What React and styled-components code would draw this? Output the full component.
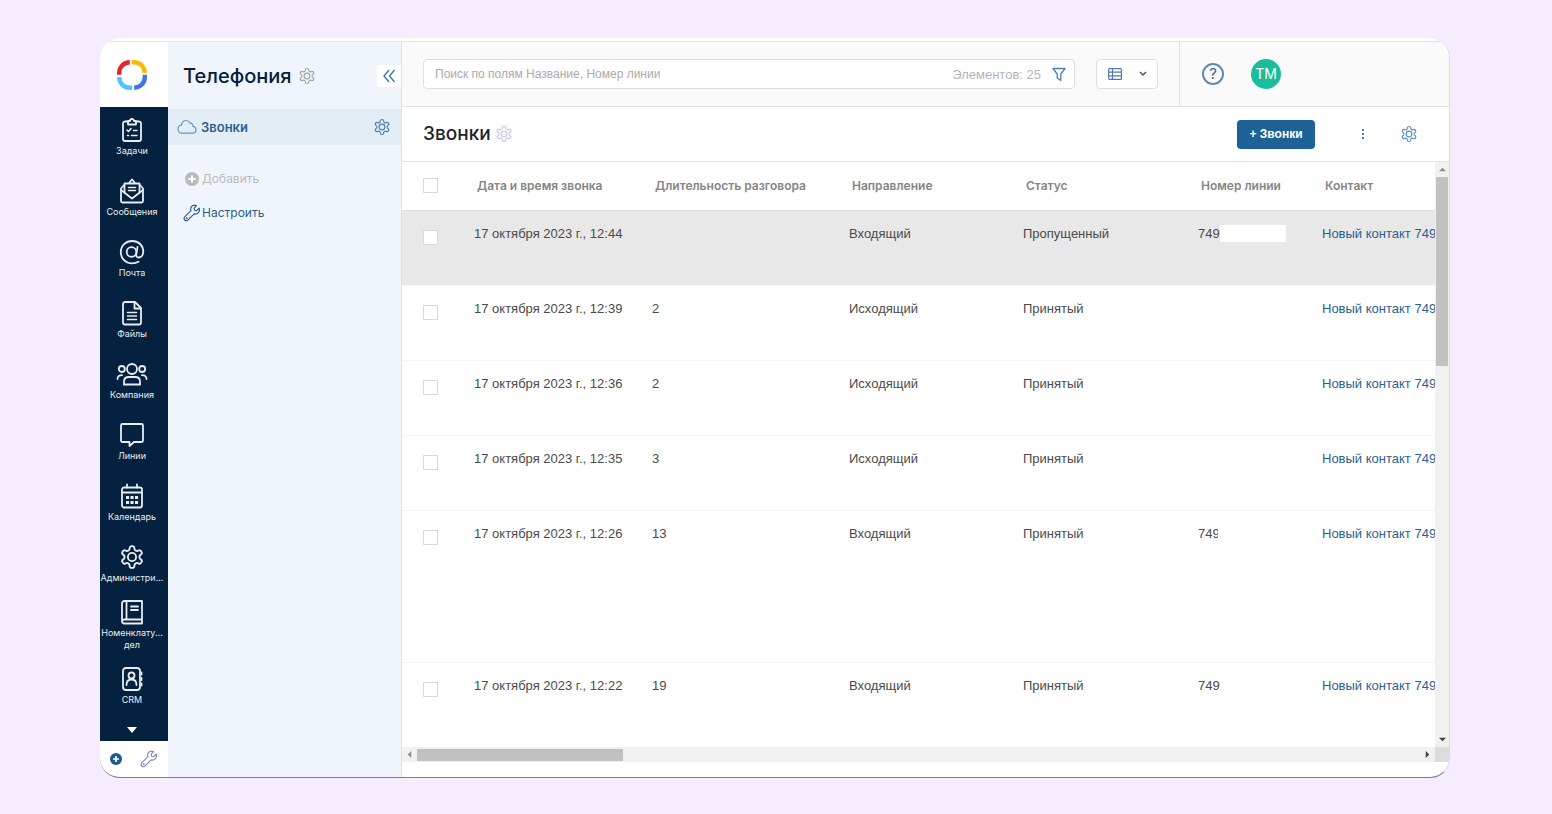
import React from "react";
import styled, { createGlobalStyle, css } from "styled-components";

const GlobalStyle = createGlobalStyle`
  * {
    box-sizing: border-box;
  }
  body {
    margin: 0;
    background: #f5ecfe;
    font-family: "Liberation Sans", Arial, sans-serif;
    font-size: 13px;
    color: #4a4a4a;
  }
  button, input {
    font: inherit;
    color: inherit;
  }
  button {
    border: 0;
    padding: 0;
    background: none;
    cursor: pointer;
  }
  a {
    text-decoration: none;
  }
  svg {
    display: block;
    flex: none;
  }
`;

const Icon = ({ size = 26, stroke = 1.8, children }) => (
  <svg
    width={size}
    height={size}
    viewBox="0 0 26 26"
    fill="none"
    stroke="currentColor"
    strokeWidth={stroke}
    strokeLinecap="round"
    strokeLinejoin="round"
    aria-hidden="true"
  >
    {children}
  </svg>
);

const Gear = ({ size = 18, stroke = 1.6 }) => (
  <svg
    width={size}
    height={size}
    viewBox="0 0 24 24"
    fill="none"
    stroke="currentColor"
    strokeWidth={stroke}
    strokeLinejoin="round"
    aria-hidden="true"
  >
    <path d="M12.22 2h-.44a2 2 0 0 0-2 2v.18a2 2 0 0 1-1 1.73l-.43.25a2 2 0 0 1-2 0l-.15-.08a2 2 0 0 0-2.73.73l-.22.38a2 2 0 0 0 .73 2.73l.15.1a2 2 0 0 1 1 1.72v.51a2 2 0 0 1-1 1.74l-.15.09a2 2 0 0 0-.73 2.73l.22.38a2 2 0 0 0 2.73.73l.15-.08a2 2 0 0 1 2 0l.43.25a2 2 0 0 1 1 1.73V20a2 2 0 0 0 2 2h.44a2 2 0 0 0 2-2v-.18a2 2 0 0 1 1-1.73l.43-.25a2 2 0 0 1 2 0l.15.08a2 2 0 0 0 2.73-.73l.22-.39a2 2 0 0 0-.73-2.73l-.15-.08a2 2 0 0 1-1-1.74v-.5a2 2 0 0 1 1-1.74l.15-.09a2 2 0 0 0 .73-2.73l-.22-.38a2 2 0 0 0-2.73-.73l-.15.08a2 2 0 0 1-2 0l-.43-.25a2 2 0 0 1-1-1.73V4a2 2 0 0 0-2-2z" />
    <circle cx="12" cy="12" r="3.8" />
  </svg>
);

const Wrench = () => (
  <svg width="18" height="18" viewBox="0 0 24 24" fill="none" stroke="currentColor" strokeWidth="1.6" strokeLinejoin="round" aria-hidden="true">
    <path d="M21.6 5.6l-3.5 3.2-2.7-.5-.6-2.8 3.2-3.4c-2.5-1-5.3-.4-6.700 1.500-1.200 1.600-1.300 3.500-.7 5.300L2.300 17.200a2.900 2.900 0 0 0 0 4.200 2.900 2.900 0 0 0 4.200 0l8.300-8.300c1.900.6 4 .2 5.400-1.200 1.700-1.700 2.200-4 1.400-6.300z" />
    <circle cx="4.900" cy="18.900" r=".5" />
  </svg>
);

const PlusDisc = ({ size }) => (
  <svg width={size} height={size} viewBox="0 0 14 14" aria-hidden="true">
    <circle cx="7" cy="7" r="7" fill="currentColor" />
    <path d="M7 3.500v7M3.500 7h7" stroke="#fff" strokeWidth="2" />
  </svg>
);

const navItems = [
  {
    label: "Задачи",
    icon: (
      <Icon>
        <path d="M9 4.500H6a2 2 0 0 0-2 2V22a2 2 0 0 0 2 2h14a2 2 0 0 0 2-2V6.500a2 2 0 0 0-2-2h-3" />
        <path d="M9 7.500h8V4h-2a2 2 0 0 0-4 0H9z" />
        <path d="M8 13l1.500 1.500 2.500-3M14.500 13.500H18M8.500 18.500h1M12.500 18.500H18" strokeWidth="1.600" />
      </Icon>
    ),
  },
  {
    label: "Сообщения",
    icon: (
      <Icon>
        <path d="M5 7L2 10.500V23a1.500 1.500 0 0 0 1.500 1.500h19A1.500 1.500 0 0 0 24 23V10.500L21 7" />
        <path d="M2 12l11 8.500L24 12" />
        <path d="M5.500 14.500V5.500h15v9M9.500 5.500l3.500-4 3.500 4" />
        <path d="M9.500 9.500h7M9.500 12.500h7" strokeWidth="1.500" />
      </Icon>
    ),
  },
  {
    label: "Почта",
    icon: (
      <Icon>
        <circle cx="12.500" cy="13" r="4.800" />
        <path d="M18.500 8l-1.200 7.500c-.3 2 .6 3 2.200 3 2.700 0 4.800-2.500 4.800-6C24.300 6.500 19.500 2 13.200 2 6.800 2 1.800 6.800 1.800 13.200S6.500 24.300 13 24.300c2.500 0 4.600-.5 6.500-1.600" />
      </Icon>
    ),
  },
  {
    label: "Файлы",
    icon: (
      <Icon>
        <path d="M16 2H6a2 2 0 0 0-2 2v18.500a2 2 0 0 0 2 2h14a2 2 0 0 0 2-2V8z" />
        <path d="M15.500 2.500V8.500H21.500" />
        <path d="M8.500 12.500h9M8.500 16h9M8.500 19.500h9" strokeWidth="1.600" />
      </Icon>
    ),
  },
  {
    label: "Компания",
    icon: (
      <svg width="32" height="26" viewBox="0 0 32 26" fill="none" stroke="currentColor" strokeWidth="1.800" strokeLinecap="round" aria-hidden="true">
        <circle cx="16" cy="8" r="5" />
        <circle cx="5.800" cy="8" r="3" />
        <circle cx="26.200" cy="8" r="3" />
        <path d="M8 23.500v-3c0-3 2-4.500 5-4.500h6c3 0 5 1.500 5 4.500v3zM1.500 18c0-2.500 1.500-3.800 4.500-3.800M30.500 18c0-2.500-1.500-3.800-4.500-3.800" />
      </svg>
    ),
  },
  {
    label: "Линии",
    icon: (
      <Icon>
        <path d="M3.500 2h19A1.500 1.500 0 0 1 24 3.500v15a1.500 1.500 0 0 1-1.500 1.500H15l-4.500 4v-4h-7A1.500 1.500 0 0 1 2 18.500v-15A1.500 1.500 0 0 1 3.500 2z" />
      </Icon>
    ),
  },
  {
    label: "Календарь",
    icon: (
      <Icon>
        <rect x="3" y="4.500" width="20" height="20" rx="2" />
        <path d="M3.500 9.500h19M8 1.500v3M18 1.500v3" />
        <path d="M8.500 14.500h.1M13 14.500h.1M17.500 14.500h.1M8.500 19.500h.1M13 19.500h.1M17.500 19.500h.1" strokeWidth="3" strokeLinecap="square" />
      </Icon>
    ),
  },
  { label: "Администри...", tight: true, icon: <Gear size={26} stroke={1.7} /> },
  {
    label: "Номенклату...\nдел",
    tight: true,
    icon: (
      <Icon>
        <path d="M23 20.500V2H5.500A2.500 2.500 0 0 0 3 4.500V22a2.500 2.500 0 0 0 2.500 2.500H23v-4H5.500A2.500 2.500 0 0 0 3 22.500M7.500 2v18" />
        <path d="M12 7.500h7M12 11h7" strokeWidth="1.800" />
      </Icon>
    ),
  },
  {
    label: "CRM",
    tight: true,
    icon: (
      <Icon>
        <rect x="4" y="2" width="17" height="22" rx="3" />
        <circle cx="12.500" cy="9.500" r="3" />
        <path d="M7.500 19c0-4 2-5.500 5-5.500s5 1.500 5 5.500" />
        <path d="M22.500 6.500v2M22.500 12v2M22.500 17.500v2" />
      </Icon>
    ),
  },
];

const columns = [
  { title: "Дата и время звонка", width: 178 },
  { title: "Длительность разговора", width: 197 },
  { title: "Направление", width: 174 },
  { title: "Статус", width: 175 },
  { title: "Номер линии", width: 124 },
  { title: "Контакт", width: 240 },
];

const calls = [
  { date: "17 октября 2023 г., 12:44", duration: "", direction: "Входящий", status: "Пропущенный", line: "749", masked: true, active: true },
  { date: "17 октября 2023 г., 12:39", duration: "2", direction: "Исходящий", status: "Принятый" },
  { date: "17 октября 2023 г., 12:36", duration: "2", direction: "Исходящий", status: "Принятый" },
  { date: "17 октября 2023 г., 12:35", duration: "3", direction: "Исходящий", status: "Принятый" },
  { date: "17 октября 2023 г., 12:26", duration: "13", direction: "Входящий", status: "Принятый", line: "749", cut: true, tall: true },
  { date: "17 октября 2023 г., 12:22", duration: "19", direction: "Входящий", status: "Принятый", line: "749" },
];

const App = () => {
  return (
    <>
      <GlobalStyle />
      <Page>
        <Window>
          <Rail>
            <Logo href="#" aria-label="Главная">
              <svg width="34" height="34" viewBox="0 0 34 34" fill="none" strokeWidth="4.400" aria-hidden="true">
                <path d="M4.200 16.800V15C4.200 9 8.500 4.600 14.800 4.300" stroke="#e9222b" />
                <path d="M16.800 4.200H19c6 0 10.500 4.200 10.800 10.600" stroke="#fdb900" />
                <path d="M29.800 16.800V19c0 6-4.200 10.500-10.600 10.800" stroke="#4274e2" />
                <path d="M17.200 29.800H15C9 29.800 4.500 25.600 4.200 19.200" stroke="#4cc4fb" />
              </svg>
            </Logo>
            <Nav>
              {navItems.map((item) => (
                <NavLink href="#" key={item.label} $tight={item.tight}>
                  {item.icon}
                  <NavLabel>{item.label}</NavLabel>
                </NavLink>
              ))}
              <MoreButton aria-label="Ещё">
                <svg width="10" height="6" viewBox="0 0 10 6" aria-hidden="true">
                  <path d="M0 0h10L5 6z" fill="#fff" />
                </svg>
              </MoreButton>
            </Nav>
            <RailFooter>
              <RailButton aria-label="Создать">
                <PlusDisc size={12} />
              </RailButton>
              <RailButton aria-label="Настройки" $light>
                <Wrench />
              </RailButton>
            </RailFooter>
          </Rail>

          <Panel>
            <PanelHeader>
              <PanelTitle>Телефония</PanelTitle>
              <IconButton aria-label="Настройки раздела" $color="#a3a6ab">
                <Gear />
              </IconButton>
              <CollapseButton aria-label="Свернуть">
                <svg width="14" height="14" viewBox="0 0 14 14" fill="none" stroke="currentColor" strokeWidth="1.400" aria-hidden="true">
                  <path d="M7 1L2 7l5 6M12.500 1l-5 6 5 6" />
                </svg>
              </CollapseButton>
            </PanelHeader>
            <SectionRow>
              <SectionLink href="#">
                <svg width="20" height="16" viewBox="0 0 20 16" fill="none" stroke="#6f93bb" strokeWidth="1.200" aria-hidden="true">
                  <path d="M4.800 14.200h10.700c2 0 3.500-1.500 3.500-3.400 0-1.800-1.300-3.200-3-3.400.2-2-1.300-3.500-3-3.300C12.200 2.500 10.600 1.500 9 1.500 6.400 1.500 4.500 3.500 4.600 6 2.500 6.300 1 8 1 10.100c0 2.300 1.700 4.100 3.800 4.100z" />
                </svg>
                Звонки
              </SectionLink>
              <IconButton aria-label="Настройки приложения" $color="#5480ad">
                <Gear />
              </IconButton>
            </SectionRow>
            <PanelActions>
              <PanelAction disabled>
                <ActionIcon>
                  <PlusDisc size={14} />
                </ActionIcon>
                Добавить
              </PanelAction>
              <PanelAction>
                <ActionIcon>
                  <Wrench />
                </ActionIcon>
                Настроить
              </PanelAction>
            </PanelActions>
          </Panel>

          <Main>
            <TopBar>
              <SearchArea>
                <SearchBox>
                  <SearchInput type="text" aria-label="Поиск" placeholder="Поиск по полям Название, Номер линии" />
                  <Count>Элементов: 25</Count>
                  <IconButton aria-label="Фильтр" $color="#4f7fb3">
                    <svg width="14" height="15" viewBox="0 0 14 15" fill="none" stroke="currentColor" strokeWidth="1.300" strokeLinejoin="round" aria-hidden="true">
                      <path d="M1 1.500h12L8.800 7v6.500L5.200 11V7z" />
                    </svg>
                  </IconButton>
                </SearchBox>
                <ViewButton aria-label="Вид списка" aria-haspopup="menu">
                  <svg width="14" height="12" viewBox="0 0 14 12" fill="none" stroke="#5478ab" strokeWidth="1.200" aria-hidden="true">
                    <rect x=".6" y=".6" width="12.800" height="10.800" rx="1" />
                    <path d="M4.500.6v10.800M.6 4.200h12.800M.6 7.800h12.800" />
                  </svg>
                  <svg width="8" height="6" viewBox="0 0 8 6" fill="none" stroke="#555" strokeWidth="1.500" aria-hidden="true">
                    <path d="M1 1l3 3 3-3" />
                  </svg>
                </ViewButton>
              </SearchArea>
              <Profile>
                <HelpButton aria-label="Помощь">?</HelpButton>
                <Avatar>ТМ</Avatar>
              </Profile>
            </TopBar>

            <TitleBar>
              <PageTitle>Звонки</PageTitle>
              <IconButton aria-label="Настройки страницы" $color="#d3cdee">
                <Gear stroke={2} />
              </IconButton>
              <TitleActions>
                <CreateButton>+ Звонки</CreateButton>
                <IconButton aria-label="Меню" $color="#4683b3">
                  <svg width="4" height="12" viewBox="0 0 4 12" fill="currentColor" aria-hidden="true">
                    <path d="M1 1h2v2H1zM1 5h2v2H1zM1 9h2v2H1z" />
                  </svg>
                </IconButton>
                <IconButton aria-label="Настройки списка" $color="#5b93bf">
                  <Gear />
                </IconButton>
              </TitleActions>
            </TitleBar>

            <Grid>
              <Viewport>
                <Table>
                  <colgroup>
                    <Col $width={60} />
                    {columns.map((column) => (
                      <Col key={column.title} $width={column.width} />
                    ))}
                  </colgroup>
                  <thead>
                    <tr>
                      <HeadCell>
                        <Checkbox aria-label="Выбрать все" />
                      </HeadCell>
                      {columns.map((column) => (
                        <HeadCell key={column.title}>{column.title}</HeadCell>
                      ))}
                    </tr>
                  </thead>
                  <tbody>
                    {calls.map((call) => (
                      <Row key={call.date} $active={call.active} $tall={call.tall}>
                        <CheckCell>
                          <Checkbox aria-label={call.date} />
                        </CheckCell>
                        <Cell>{call.date}</Cell>
                        <Cell>{call.duration}</Cell>
                        <Cell>{call.direction}</Cell>
                        <Cell>{call.status}</Cell>
                        <Cell>
                          <LineNumber $cut={call.cut}>
                            {call.line}
                            {call.masked && <Mask />}
                          </LineNumber>
                        </Cell>
                        <Cell>
                          <ContactLink href="#">Новый контакт 749</ContactLink>
                        </Cell>
                      </Row>
                    ))}
                  </tbody>
                </Table>
              </Viewport>
              <VerticalBar>
                <Arrow viewBox="0 0 8 8">
                  <path d="M0 6l4-4 4 4z" fill="#8b8b8b" />
                </Arrow>
                <VerticalThumb />
                <Arrow viewBox="0 0 8 8">
                  <path d="M0 2l4 4 4-4z" fill="#404040" />
                </Arrow>
              </VerticalBar>
              <HorizontalBar>
                <Arrow viewBox="0 0 8 8">
                  <path d="M6 0L2 4l4 4z" fill="#8b8b8b" />
                </Arrow>
                <HorizontalThumb />
                <Arrow viewBox="0 0 8 8">
                  <path d="M2 0l4 4-4 4z" fill="#404040" />
                </Arrow>
              </HorizontalBar>
              <Corner />
            </Grid>
          </Main>
        </Window>
      </Page>
    </>
  );
};

const Page = styled.div`
  display: flex;
  min-height: 100vh;
  padding: 38px 102px 36px 100px;
`;

const Window = styled.div`
  display: grid;
  grid-template-columns: 68px 234px minmax(0, 1fr);
  flex: 1;
  min-width: 0;
  padding-top: 3px;
  background: #fff;
  border-right: 1px solid #dcdce0;
  border-bottom: 1px solid #808085;
  border-radius: 20px;
  overflow: hidden;
`;

const Rail = styled.aside`
  display: flex;
  flex-direction: column;
  border-top: 1px solid #e6e6e8;
`;

const Logo = styled.a`
  display: flex;
  align-items: center;
  justify-content: center;
  height: 65px;
  padding-right: 4px;
`;

const Nav = styled.nav`
  display: flex;
  flex-direction: column;
  flex: 1;
  padding: 10px 4px 0 0;
  background: #04213f;
`;

const NavLink = styled.a`
  display: flex;
  flex-direction: column;
  align-items: center;
  gap: 2px;
  margin-bottom: ${(props) => (props.$tight ? 15 : 21)}px;
  color: #e9edf1;
`;

const NavLabel = styled.span`
  font-family: Inter, "Liberation Sans", sans-serif;
  font-size: 9px;
  line-height: 12px;
  white-space: pre;
  text-align: center;
`;

const MoreButton = styled.button`
  display: flex;
  justify-content: center;
  padding: 6px 0 8px;
`;

const RailFooter = styled.div`
  display: flex;
  align-items: center;
  gap: 18px;
  height: 36px;
  padding-left: 10px;
`;

const RailButton = styled.button`
  color: ${(props) => (props.$light ? "#7b90b8" : "#1a5b92")};
`;

const Panel = styled.aside`
  background: #f0f5fc;
  border-top: 1px solid #e1e5ea;
  border-right: 1px solid #dde1e6;
`;

const PanelHeader = styled.div`
  display: flex;
  align-items: center;
  gap: 6px;
  height: 67px;
  padding-left: 15px;
`;

const PanelTitle = styled.h1`
  margin: 0;
  font-family: Inter, "Liberation Sans", sans-serif;
  font-size: 20px;
  font-weight: 500;
  line-height: 24px;
  color: #06203c;
`;

const IconButton = styled.button`
  display: flex;
  align-items: center;
  justify-content: center;
  color: ${(props) => props.$color};
`;

const CollapseButton = styled.button`
  display: flex;
  align-items: center;
  justify-content: center;
  width: 24px;
  height: 22px;
  margin-left: auto;
  background: #fff;
  border-radius: 4px 0 0 4px;
  color: #3f7aab;
`;

const SectionRow = styled.div`
  display: flex;
  align-items: center;
  justify-content: space-between;
  height: 36px;
  padding: 0 10px 0 9px;
  background: #e3edf6;
`;

const SectionLink = styled.a`
  display: flex;
  align-items: center;
  gap: 4px;
  font-family: Inter, "Liberation Sans", sans-serif;
  font-weight: 600;
  color: #2b5f93;
`;

const PanelActions = styled.div`
  display: flex;
  flex-direction: column;
  align-items: flex-start;
  gap: 14px;
  padding: 24px 15px;
`;

const PanelAction = styled.button`
  display: flex;
  align-items: center;
  gap: 1px;
  font-family: Inter, "Liberation Sans", sans-serif;
  font-size: 12px;
  line-height: 20px;
  color: #2b5f93;

  &:disabled {
    color: #b9bbbf;
    cursor: default;
  }
`;

const ActionIcon = styled.span`
  display: flex;
  justify-content: center;
  width: 18px;
`;

const Main = styled.main`
  display: flex;
  flex-direction: column;
  min-width: 0;
  padding-bottom: 15px;
`;

const TopBar = styled.header`
  display: flex;
  height: 66px;
  background: #fafafa;
  border-top: 1px solid #e4e4e4;
  border-bottom: 1px solid #e0e0e0;
`;

const SearchArea = styled.div`
  display: flex;
  align-items: center;
  flex: 1;
  gap: 21px;
  min-width: 0;
  padding: 0 21px;
  border-right: 1px solid #e0e0e0;
`;

const fieldBox = css`
  display: flex;
  align-items: center;
  height: 30px;
  background: #fff;
  border: 1px solid #dfdfdf;
  border-radius: 4px;
`;

const SearchBox = styled.div`
  ${fieldBox}
  flex: 1;
  gap: 11px;
  min-width: 0;
  padding: 0 8px 0 11px;
`;

const SearchInput = styled.input`
  flex: 1;
  min-width: 0;
  padding: 0;
  border: 0;
  outline: 0;
  background: none;
  font-size: 12px;

  &::placeholder {
    color: #aaa;
    opacity: 1;
  }
`;

const Count = styled.span`
  color: #b4b4b4;
`;

const ViewButton = styled.button`
  ${fieldBox}
  justify-content: space-between;
  width: 62px;
  padding: 0 10px 0 11px;
`;

const Profile = styled.div`
  display: flex;
  align-items: center;
  gap: 27px;
  width: 269px;
  padding-left: 22px;
`;

const HelpButton = styled.button`
  width: 22px;
  height: 22px;
  border: 2px solid #6488b2;
  border-radius: 50%;
  font-family: Inter, "Liberation Sans", sans-serif;
  font-size: 15px;
  line-height: 18px;
  color: #33639a;
`;

const Avatar = styled.div`
  width: 30px;
  height: 30px;
  border-radius: 50%;
  background: #1bbc9b;
  font-family: Inter, "Liberation Sans", sans-serif;
  font-size: 14px;
  line-height: 30px;
  text-align: center;
  color: #fff;
`;

const TitleBar = styled.div`
  display: flex;
  align-items: center;
  gap: 4px;
  height: 55px;
  padding: 0 31px 0 21px;
  border-bottom: 1px solid #e2e2e2;
`;

const PageTitle = styled.h2`
  margin: 0;
  font-family: Inter, "Liberation Sans", sans-serif;
  font-size: 19px;
  font-weight: 500;
  line-height: 24px;
  color: #1d232b;
`;

const TitleActions = styled.div`
  display: flex;
  align-items: center;
  gap: 35px;
  margin-left: auto;
`;

const CreateButton = styled.button`
  width: 78px;
  height: 29px;
  margin-right: 11px;
  background: #1c6296;
  border-radius: 4px;
  font-size: 12px;
  font-weight: 700;
  color: #fff;
`;

const Grid = styled.div`
  display: grid;
  grid-template-columns: minmax(0, 1fr) 14px;
  grid-template-rows: 1fr 15px;
  flex: 1;
`;

const Viewport = styled.div`
  min-width: 0;
  overflow: hidden;
`;

const Table = styled.table`
  width: 1148px;
  table-layout: fixed;
  border-collapse: collapse;
`;

const Col = styled.col`
  width: ${(props) => props.$width}px;
`;

const HeadCell = styled.th`
  height: 48px;
  padding: 0 0 0 15px;
  border-bottom: 1px solid #dedede;
  font-family: Inter, "Liberation Sans", sans-serif;
  font-size: 12px;
  font-weight: 600;
  text-align: left;
  color: #858585;

  &:first-child {
    padding-left: 21px;
  }
`;

const Row = styled.tr`
  height: ${(props) => (props.$tall ? 152 : 75)}px;
  background: ${(props) => (props.$active ? "#e8e8e8" : "#fff")};
  border-bottom: 1px solid #f5f5f5;

  &:last-child {
    border-bottom: 0;
  }
`;

const Cell = styled.td`
  padding: 14px 0 0 12px;
  line-height: 18px;
  vertical-align: top;
  white-space: nowrap;
`;

const CheckCell = styled.td`
  padding: 19px 0 0 21px;
  vertical-align: top;
`;

const Checkbox = styled.input.attrs({ type: "checkbox" })`
  appearance: none;
  display: block;
  width: 15px;
  height: 15px;
  margin: 0;
  background: #fff;
  border: 1px solid #d9d9d9;
`;

const LineNumber = styled.span`
  display: flex;
  align-items: center;
  width: ${(props) => (props.$cut ? "20px" : "auto")};
  overflow: hidden;
`;

const Mask = styled.span`
  width: 66px;
  height: 17px;
  background: #fff;
`;

const ContactLink = styled.a`
  color: #2b5f93;
`;

const VerticalBar = styled.div`
  display: flex;
  flex-direction: column;
  align-items: center;
  padding: 4px 0;
  background: #f1f1f1;
`;

const Arrow = styled.svg.attrs({ "aria-hidden": true })`
  width: 7px;
  height: 7px;
`;

const VerticalThumb = styled.div`
  width: 12px;
  height: 189px;
  margin: 4px 0 auto;
  background: #c1c1c1;
`;

const HorizontalBar = styled.div`
  display: flex;
  align-items: center;
  padding: 0 4px;
  background: #f1f1f1;
`;

const HorizontalThumb = styled.div`
  width: 206px;
  height: 12px;
  margin: 0 auto 0 4px;
  background: #c1c1c1;
`;

const Corner = styled.div`
  background: #dcdcdc;
`;

export default App;
